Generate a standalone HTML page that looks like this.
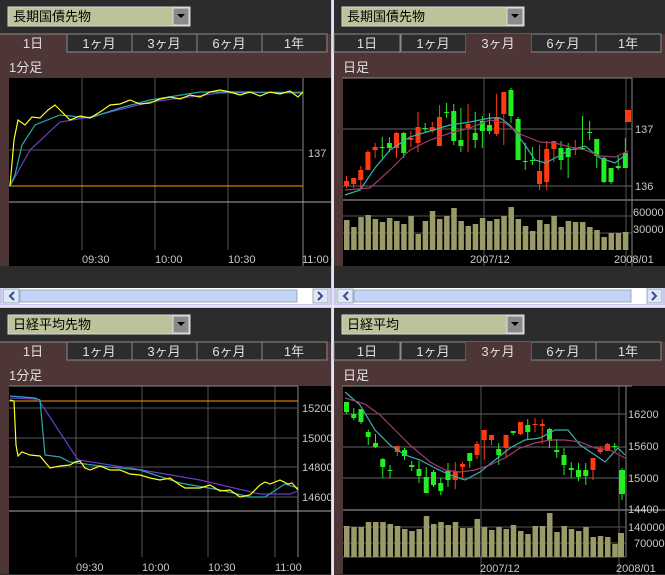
<!DOCTYPE html>
<html><head><meta charset="utf-8"><style>
html,body{margin:0;padding:0;width:665px;height:575px;overflow:hidden;background:#c8c8f0}
svg{display:block}
text{font-family:"Liberation Sans","Noto Sans CJK JP",sans-serif}
.j{font-family:"Liberation Sans","Noto Sans CJK JP",sans-serif;font-size:13px}
.ax{font-family:"DejaVu Sans Mono","Liberation Mono",monospace;font-size:11px;fill:#c8c8c8}
</style></head><body>
<svg id="s" width="665" height="575" xmlns="http://www.w3.org/2000/svg">
<rect width="665" height="575" fill="#c8c8f0"/>
<line x1="333" y1="0" x2="333" y2="575" stroke="#fff" stroke-width="1"/>
<line x1="0" y1="306" x2="665" y2="306" stroke="#fff" stroke-width="1"/>
<g id="panels"></g>
<g class="j">
<text x="13" y="21" fill="#000">長期国債先物</text>
<text x="347" y="21" fill="#000">長期国債先物</text>
<text x="13" y="329" fill="#000">日経平均先物</text>
<text x="347" y="329" fill="#000">日経平均</text>
</g>
<g class="j" fill="#e0e0e0" text-anchor="middle" id="tabs"></g>
<g class="j" fill="#e0e0e0">
<text x="9" y="72">1分足</text><text x="343" y="72">日足</text>
<text x="9" y="380">1分足</text><text x="343" y="380">日足</text>
</g>
<g class="ax">
<text x="82" y="263">09:30</text><text x="155" y="263">10:00</text><text x="228" y="263">10:30</text><text x="302" y="263">11:00</text>
<text x="308" y="157">137</text>
<text x="470" y="263">2007/12</text><text x="614" y="263">2008/01</text>
<text x="635" y="133">137</text><text x="635" y="190">136</text>
<text x="633" y="216">60000</text><text x="633" y="233">30000</text>
<text x="76" y="571">09:30</text><text x="142" y="571">10:00</text><text x="208" y="571">10:30</text><text x="275" y="571">11:00</text>
<text x="302" y="412">15200</text><text x="302" y="442">15000</text><text x="302" y="471">14800</text><text x="302" y="501">14600</text>
<text x="628" y="418">16200</text><text x="628" y="450">15600</text><text x="628" y="482">15000</text><text x="628" y="513">14400</text>
<text x="628" y="531">140000</text><text x="634" y="547">70000</text>
<text x="480" y="572">2007/12</text><text x="616" y="572">2008/01</text>
</g>
</svg>
<script>
var S='http://www.w3.org/2000/svg',P=document.getElementById('panels');
function el(t,a,p){var e=document.createElementNS(S,t);for(var k in a)e.setAttribute(k,a[k]);(p||P).appendChild(e);return e}
function panel(x,y,sb){
 el('rect',{x:x,y:y,width:331,height:34,fill:'#2c2c2c'});
 el('rect',{x:x,y:y+34,width:331,height:sb?232:234,fill:'#4e3636'});
 el('rect',{x:x,y:y+266,width:331,height:22,fill:'#2c2c2c'});
 el('rect',{x:x+8,y:y+7,width:182,height:19,fill:'#bcc39a',stroke:'#d8d8d8'});
 el('rect',{x:x+173,y:y+8,width:16,height:17,fill:'#8a8a8a',stroke:'#ddd'});
 el('path',{d:'M'+(x+177)+' '+(y+14)+'h8l-4 4z',fill:'#000'});
 var tx=[67,132,197,262,327];
 el('rect',{x:x,y:y+34,width:67,height:19,fill:'#4e3636'});
 for(var i=0;i<4;i++){el('rect',{x:x+tx[i],y:y+34,width:65,height:18,fill:'#2c2c2c',stroke:'#8a8a8a'});}
 el('line',{x1:x,y1:y+34,x2:x+67,y2:y+34,stroke:'#8a8a8a'});
 el('rect',{x:x+9,y:y+78,width:322,height:188,fill:'#000'});
 if(sb){
  el('rect',{x:x+2,y:y+288,width:327,height:16,fill:'#ffffff'});
  el('rect',{x:x+20,y:y+290,width:277,height:12,fill:'#c4d4f8',stroke:'#9ab'});
  el('rect',{x:x+3,y:y+289,width:16,height:14,fill:'#dfe6f8',stroke:'#9ab'});
  el('rect',{x:x+313,y:y+289,width:15,height:14,fill:'#dfe6f8',stroke:'#9ab'});
  el('path',{d:'M'+(x+14)+' '+(y+292)+'l-4 4 4 4',stroke:'#3a4a8a','stroke-width':2,fill:'none'});
  el('path',{d:'M'+(x+318)+' '+(y+292)+'l4 4-4 4',stroke:'#3a4a8a','stroke-width':2,fill:'none'});
 }
}
panel(0,0,1);panel(334,0,1);panel(0,308,0);panel(334,308,0);
var T=document.getElementById('tabs'),lb=['1日','1ヶ月','3ヶ月','6ヶ月','1年'],cx=[33,99,164,229,294];
function act(x,y){el('rect',{x:x+132,y:y+34,width:65,height:19,fill:'#4e3636'});el('rect',{x:x,y:y+34,width:66,height:18,fill:'#2c2c2c',stroke:'#8a8a8a'});}
act(334,0);act(334,308);
[[0,0],[334,0],[0,308],[334,308]].forEach(function(o){lb.forEach(function(l,i){var t=el('text',{x:o[0]+cx[i],y:o[1]+48},T);t.textContent=l;});});
P.appendChild(T);
function pl(pts,c){el('polyline',{points:pts,fill:'none',stroke:c,'stroke-width':1.2});}
function ln(x1,y1,x2,y2,c){el('line',{x1:x1,y1:y1,x2:x2,y2:y2,stroke:c,'stroke-width':1});}
[82,155,228].forEach(function(v){ln(v,78,v,250,'#555');});
ln(303,78,303,266,'#888');ln(9,150,303,150,'#555');ln(9,202,331,202,'#aaa');ln(9,186,303,186,'#ff9900');
pl('10,186 30,150 60,122 90,117 150,102 220,93 303,92','#6a3cc8');
pl('10,186 15,175 22,145 35,125 60,115 90,118 120,108 150,100 200,92 250,92 303,93','#2aa8a8');
pl('10,186 14,140 18,120 25,125 32,117 40,118 48,110 55,105 62,112 70,120 80,116 90,118 100,112 110,105 120,104 130,100 140,104 150,103 160,99 170,97 180,99 190,95 200,97 210,92 220,90 230,92 240,95 250,92 260,96 270,92 280,94 290,91 298,97 303,92','#ffff22');
[76,142,208,275].forEach(function(v){ln(v,386,v,557,'#555');});
ln(298,386,298,557,'#888');ln(9,386,298,386,'#888');
[408,438,467,497].forEach(function(v){ln(9,v,298,v,'#555');});
ln(9,511,331,511,'#aaa');ln(9,401,298,401,'#ff9900');
pl('10,398 35,399 40,402 78,460 130,468 200,480 260,494 290,494 298,491','#6a3cc8');
pl('10,396 35,398 40,400 45,455 60,457 70,462 100,466 140,470 180,483 220,490 250,497 265,497 285,484 298,488','#2aa8a8');
pl('10,400 14,401 16,445 18,456 22,452 30,455 40,456 45,462 50,468 60,466 70,465 75,462 80,461 85,468 90,470 100,466 110,470 120,470 130,474 140,475 150,478 160,480 170,478 180,485 185,488 200,488 210,485 220,491 230,490 240,497 250,495 260,485 265,482 270,484 280,480 288,484 292,483 298,490','#ffff22');
function candles(x0,step,d,top,bot,vtop,vbot,vol,gx,ma1,ma2){
 ln(x0-2,top,x0-2+290,top,'#888');
 d.forEach(function(c,i){var x=x0+i*step;var o=c[0],cl=c[1];var up=cl<o;var col=up?'#ff3a10':'#22ee22';
  ln(x+2.5,c[2],x+2.5,c[3],col);el('rect',{x:x,y:Math.min(o,cl),width:5,height:Math.max(1,Math.abs(o-cl)),fill:col});
  var v=vol[i]||230;el('rect',{x:x,y:v,width:5.5,height:Math.max(0,vbot-v),fill:'#9a9a68'});});
 pl(ma1,'#3ab0b0');pl(ma2,'#a03a70');
}
ln(343,129,632,129,'#666');ln(343,186,632,186,'#666');ln(343,200,665,200,'#aaa');ln(343,216,632,216,'#555');ln(343,233,632,233,'#555');
ln(484,78,484,266,'#555');ln(626,78,626,266,'#555');ln(632,78,632,266,'#888');
var tr=[[186,181,176,188],[184,178,178,188],[180,170,166,188],[170,152,150,170],[150,147,143,158],[147,147,137,158],[143,148,137,152],[148,133,132,158],[133,153,132,158],[140,138,131,147],[143,127,112,152],[128,128,123,133],[131,127,122,133],[146,117,105,138],[112,112,103,118],[111,141,104,145],[140,146,108,152],[128,124,104,152],[133,140,112,148],[121,131,116,148],[125,131,113,134],[134,117,94,136],[114,92,93,145],[90,116,88,123],[119,160,117,160],[161,162,143,170],[160,160,147,165],[184,171,145,190],[182,149,141,190],[149,141,141,162],[148,160,141,170],[148,157,143,178],[150,149,140,155],[148,149,116,150],[132,132,121,140],[139,156,139,168],[158,182,157,183],[168,182,168,184],[166,168,156,170],[153,168,138,168]];
var tv=[220,227,217,215,219,222,218,221,224,216,234,221,211,219,216,208,221,226,224,218,221,219,216,207,219,226,231,220,224,216,227,221,222,222,227,230,237,233,233,232];
candles(344,7.15,tr,78,200,205,250,tv,0,
'345,195 360,190 375,168 390,150 410,137 430,131 450,125 470,122 490,118 500,118 510,125 525,145 535,160 545,163 555,158 570,150 585,146 600,158 615,163 628,153',
'345,190 370,188 390,170 410,150 430,140 450,133 470,128 490,120 505,123 520,134 540,142 555,143 570,147 585,150 600,156 615,157 628,151');
el('rect',{x:625,y:110,width:6,height:12,fill:'#ff3a10'});
ln(343,414,626,414,'#666');ln(343,447,626,447,'#666');ln(343,478,626,478,'#666');ln(343,510,665,510,'#aaa');
ln(343,527,626,527,'#555');ln(343,543,626,543,'#555');ln(481,386,481,575,'#555');ln(619,386,619,575,'#555');ln(626,386,626,557,'#888');ln(343,557,626,557,'#666');
var br=[[402,412,402,414],[414,418,408,420],[409,422,409,424],[432,437,430,445],[443,447,434,448],[459,467,458,478],[470,470,465,478],[452,446,446,456],[450,456,448,460],[465,467,461,471],[469,476,461,483],[477,493,467,491],[472,485,470,487],[483,491,478,495],[471,480,463,487],[480,471,462,489],[467,464,462,477],[453,461,455,468],[455,444,441,459],[440,430,440,460],[440,435,440,445],[449,455,443,465],[448,435,437,458],[431,433,431,435],[434,422,422,435],[425,432,419,440],[425,424,418,432],[426,424,419,444],[429,441,428,448],[450,452,439,458],[455,465,448,475],[468,470,462,478],[470,477,463,481],[470,476,463,485],[470,458,463,480],[452,448,446,454],[451,444,443,450],[446,446,443,450]];
var bv=[526,527,527,522,522,522,524,526,529,531,529,516,524,522,525,522,528,528,519,527,530,527,529,525,531,534,526,526,513,532,526,529,531,527,537,536,537,544];
candles(344,7.25,br,386,510,515,557,bv,0,
'345,392 360,405 375,430 390,445 405,455 420,460 435,468 450,475 465,480 480,472 495,460 510,448 525,440 540,438 555,430 568,430 580,445 595,455 605,462 618,448 625,455',
'345,398 365,404 380,415 395,430 410,445 430,462 445,470 460,472 475,470 490,465 505,458 520,448 535,443 550,440 565,440 580,442 595,448 610,450 625,458');
el('rect',{x:619,y:470,width:6,height:24,fill:'#22ee22'});ln(622,468,622,500,'#22ee22');
el('rect',{x:618,y:533,width:6,height:24,fill:'#9a9a68'});
</script>
</body></html>
